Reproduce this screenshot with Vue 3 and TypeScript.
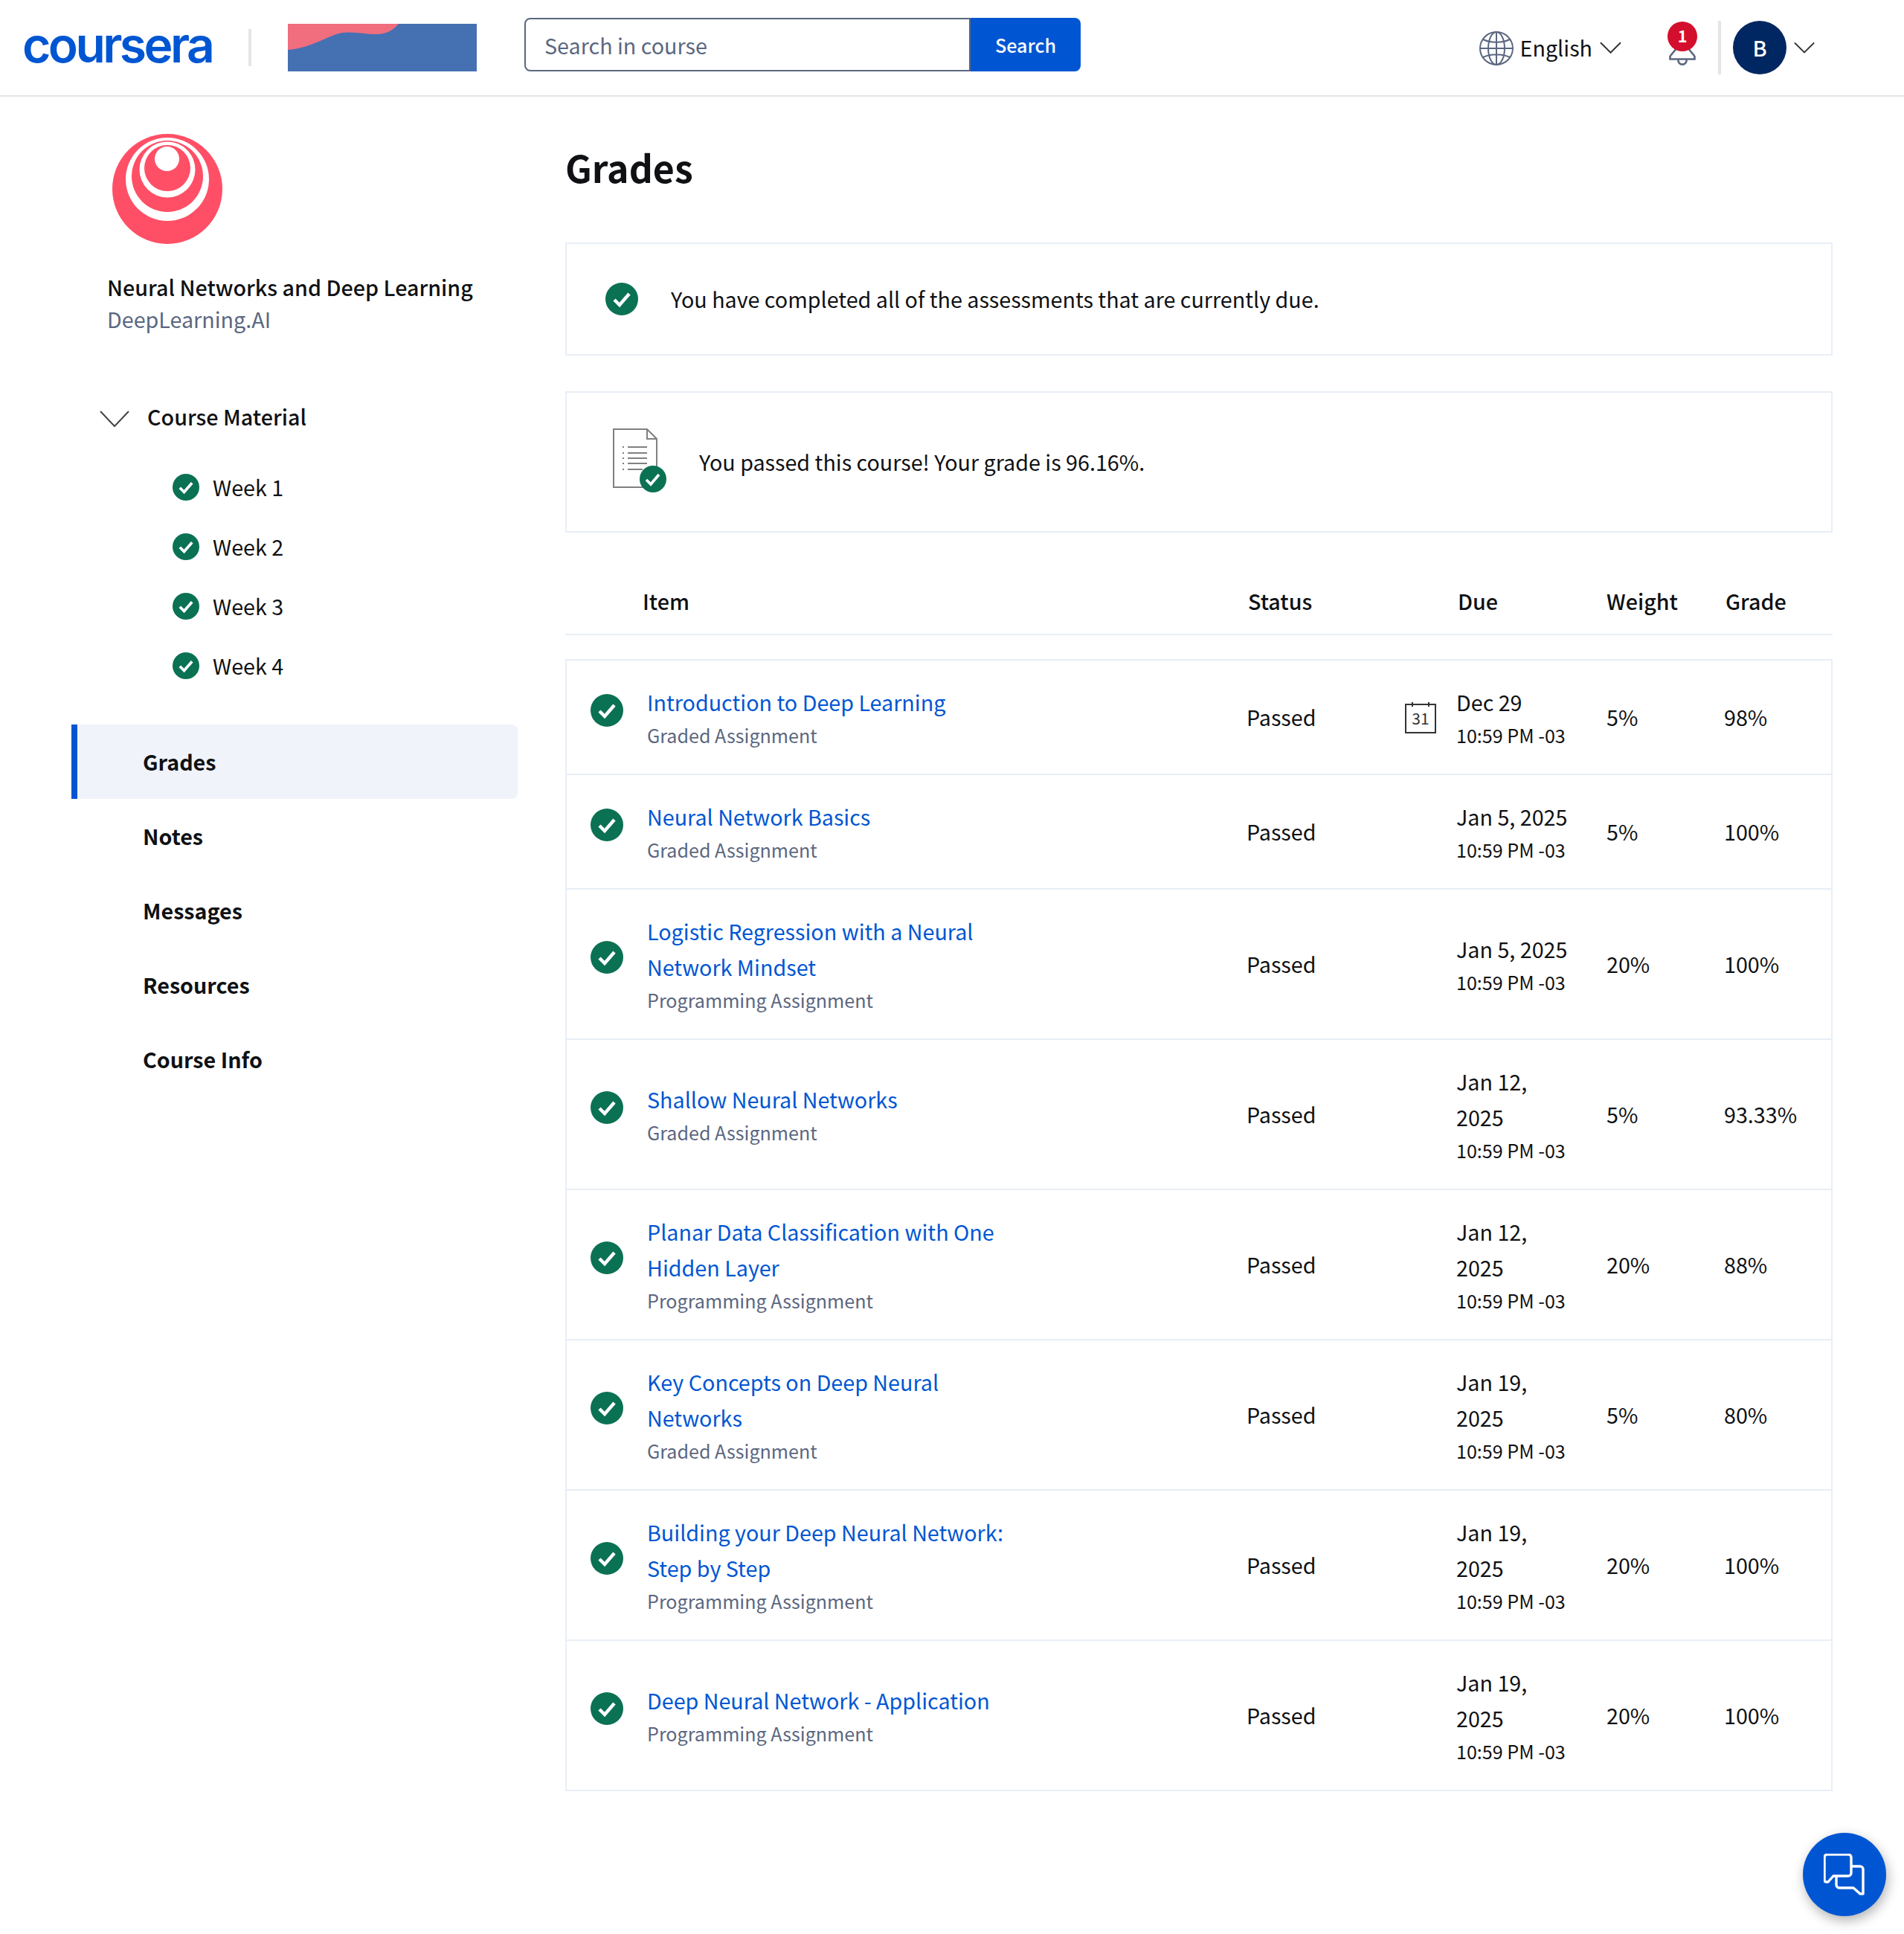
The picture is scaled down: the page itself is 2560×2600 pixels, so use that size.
<script setup lang="ts">
interface GradeRow {
  title: string;
  kind: string;
  due: string;
  weight: string;
  grade: string;
  calendar?: boolean;
}

const weeks = ["Week 1", "Week 2", "Week 3", "Week 4"];
const navItems = ["Grades", "Notes", "Messages", "Resources", "Course Info"];

const graded = "Graded Assignment";
const programming = "Programming Assignment";

const rows: GradeRow[] = [
  { title: "Introduction to Deep Learning", kind: graded, due: "Dec 29", weight: "5%", grade: "98%", calendar: true },
  { title: "Neural Network Basics", kind: graded, due: "Jan 5, 2025", weight: "5%", grade: "100%" },
  { title: "Logistic Regression with a Neural Network Mindset", kind: programming, due: "Jan 5, 2025", weight: "20%", grade: "100%" },
  { title: "Shallow Neural Networks", kind: graded, due: "Jan 12, 2025", weight: "5%", grade: "93.33%" },
  { title: "Planar Data Classification with One Hidden Layer", kind: programming, due: "Jan 12, 2025", weight: "20%", grade: "88%" },
  { title: "Key Concepts on Deep Neural Networks", kind: graded, due: "Jan 19, 2025", weight: "5%", grade: "80%" },
  { title: "Building your Deep Neural Network: Step by Step", kind: programming, due: "Jan 19, 2025", weight: "20%", grade: "100%" },
  { title: "Deep Neural Network - Application", kind: programming, due: "Jan 19, 2025", weight: "20%", grade: "100%" },
];
</script>

<template>
  <div class="page">
    <header class="topbar">
      <span class="logo">coursera</span>
      <span class="logo-sep"></span>
      <svg class="banner" viewBox="0 0 254 64" width="254" height="64">
        <rect width="254" height="64" fill="#4571b3" />
        <path d="M0 0H149C142 8 134 14 118 14C104 14 88 10 73 12C56 15 30 33 0 35Z" fill="#f06e7e" />
      </svg>
      <form class="search" @submit.prevent>
        <input class="search-input" type="text" placeholder="Search in course" />
        <button class="search-btn" type="submit">Search</button>
      </form>
      <div class="top-right">
        <svg class="globe" viewBox="0 0 46 46" width="46" height="46" fill="none" stroke="#5b6780" stroke-width="2">
          <circle cx="23" cy="23" r="22" />
          <ellipse cx="23" cy="23" rx="11" ry="22" />
          <path d="M23 1V45M1 23H45M5 11C15 16 31 16 41 11M5 35C15 30 31 30 41 35" />
        </svg>
        <span class="lang">English</span>
        <svg class="chev" viewBox="0 0 30 16" width="29" height="16" fill="none" stroke="#333" stroke-width="2"><path d="M1 1L15 15L29 1" /></svg>
        <div class="bell">
          <svg viewBox="0 0 36 32" width="36" height="32" fill="none" stroke="#5b6780" stroke-width="2.6">
            <path d="M1.5 23.5V20C3 16 8 14 10 8H26C28 14 33 16 34.5 20V23.5Z" />
            <path d="M12.5 24A5.6 5.6 0 1 0 23.5 24" />
          </svg>
          <span class="badge">1</span>
        </div>
        <span class="top-sep"></span>
        <span class="avatar">B</span>
        <svg class="chev" viewBox="0 0 30 16" width="28" height="16" fill="none" stroke="#333" stroke-width="2"><path d="M1 1L15 15L29 1" /></svg>
      </div>
    </header>

    <div class="body">
      <aside class="sidebar">
        <svg class="course-logo" viewBox="0 0 148 148" width="148" height="148">
          <circle cx="74" cy="74" r="74" fill="#ff4f66" />
          <circle cx="74" cy="61" r="56" fill="#fff" />
          <circle cx="74" cy="57" r="48" fill="#ff4f66" />
          <circle cx="74" cy="48" r="37.5" fill="#fff" />
          <circle cx="74" cy="46" r="31" fill="#ff4f66" />
          <circle cx="73.5" cy="33.5" r="16.5" fill="#fff" />
        </svg>
        <div class="course-name">Neural Networks and Deep Learning</div>
        <div class="course-org">DeepLearning.AI</div>

        <div class="material">
          <svg viewBox="0 0 40 22" width="40" height="22" fill="none" stroke="#444" stroke-width="2"><path d="M1 1L20 21L39 1" /></svg>
          <span>Course Material</span>
        </div>
        <ul class="weeks">
          <li v-for="week in weeks" :key="week">
            <svg class="check week-check" viewBox="0 0 44 44">
              <circle cx="22" cy="22" r="22" fill="#0b7153" />
              <path d="M12 23L19 30L32 15" fill="none" stroke="#fff" stroke-width="4.5" />
            </svg>
            {{ week }}
          </li>
        </ul>
        <nav class="nav">
          <a v-for="(item, i) in navItems" :key="item" class="nav-item" :class="{ active: i === 0 }">{{ item }}</a>
        </nav>
      </aside>

      <main class="main">
        <h1>Grades</h1>
        <section class="card card-due">
          <svg class="check" viewBox="0 0 44 44">
            <circle cx="22" cy="22" r="22" fill="#0b7153" />
            <path d="M12 23L19 30L32 15" fill="none" stroke="#fff" stroke-width="4.5" />
          </svg>
          <span>You have completed all of the assessments that are currently due.</span>
        </section>
        <section class="card card-pass">
          <svg class="doc" viewBox="0 0 72 86" width="72" height="86" fill="none">
            <path d="M1 1H46L59 14V79H1Z" fill="#fff" stroke="#808080" stroke-width="2" />
            <path d="M46 1V14H59" stroke="#808080" stroke-width="2" />
            <path d="M20 25H46M20 33H46M20 40H46M20 47H46M20 55H40" stroke="#808080" stroke-width="2" />
            <path d="M13 25H15M13 33H15M13 40H15M13 47H15M13 55H15" stroke="#808080" stroke-width="2" />
            <circle cx="54" cy="68" r="18" fill="#0b7153" />
            <path d="M45 69L51 75L62 62" stroke="#fff" stroke-width="3.6" />
          </svg>
          <span>You passed this course! Your grade is 96.16%.</span>
        </section>

        <div class="table-head">
          <span>Item</span>
          <span>Status</span>
          <span>Due</span>
          <span>Weight</span>
          <span>Grade</span>
        </div>

        <div class="table">
          <div v-for="row in rows" :key="row.title" class="row">
            <svg class="check row-check" viewBox="0 0 44 44">
              <circle cx="22" cy="22" r="22" fill="#0b7153" />
              <path d="M12 23L19 30L32 15" fill="none" stroke="#fff" stroke-width="4.5" />
            </svg>
            <div class="item">
              <a class="item-title">{{ row.title }}</a>
              <div class="sub">{{ row.kind }}</div>
            </div>
            <div>Passed</div>
            <div class="cal-cell">
              <svg v-if="row.calendar" viewBox="0 0 44 44" width="44" height="44" fill="none" stroke="#333" stroke-width="2">
                <path d="M2 5H42V43H2Z" />
                <path d="M11 2V8M33 2V8" />
                <text x="22" y="32" text-anchor="middle" class="cal-num">31</text>
              </svg>
            </div>
            <div class="due">
              <div class="due-date">{{ row.due }}</div>
              <div class="sub due-time">10:59 PM -03</div>
            </div>
            <div>{{ row.weight }}</div>
            <div>{{ row.grade }}</div>
          </div>
        </div>
      </main>
    </div>

    <button class="chat" type="button" aria-label="Chat">
      <svg viewBox="0 0 56 56" width="56" height="56" fill="none" stroke="#fff" stroke-width="3.4" stroke-linejoin="round">
        <path d="M5 1H33A4 4 0 0 1 37 5V26A4 4 0 0 1 33 30H13L6 38H3A2 2 0 0 1 1 36V5A4 4 0 0 1 5 1Z" />
        <path d="M37 17H49A4 4 0 0 1 53 21V54H49L40 46H21A4 4 0 0 1 17 42V30" />
      </svg>
    </button>
  </div>
</template>

<style>
html,
body {
  margin: 0;
  background: #fff;
}
</style>

<style scoped>
.page {
  position: relative;
  height: 2600px;
  overflow: hidden;
  font-family: "Noto Sans CJK SC", "Noto Sans", sans-serif;
  font-size: 28.7px;
  line-height: 48px;
  color: #0f1114;
  background: #fff;
}

.topbar {
  display: flex;
  align-items: center;
  height: 128px;
  border-bottom: 2px solid #e5e5e5;
  padding-left: 30px;
  padding-right: 120px;
  box-sizing: content-box;
}

.logo {
  width: 254px;
  font-family: Inter, sans-serif;
  font-size: 66px;
  font-weight: 600;
  letter-spacing: -3.6px;
  line-height: 66px;
  margin-top: -8px;
  color: #0056d2;
}

.logo-sep {
  width: 4px;
  height: 50px;
  margin-left: 50px;
  background: #e5e5e5;
}

.banner {
  margin-left: 49px;
}

.search {
  display: flex;
  margin-left: 64px;
  margin-top: -8px;
}

.search-input {
  width: 600px;
  height: 72px;
  box-sizing: border-box;
  border: 2px solid #5b6780;
  border-radius: 8px 0 0 8px;
  padding: 0 25px;
  font: inherit;
  color: #0f1114;
}

.search-input::placeholder {
  color: #5b6780;
  opacity: 1;
}

.search-btn {
  width: 148px;
  height: 72px;
  border: 0;
  border-radius: 0 8px 8px 0;
  background: #0056d2;
  color: #fff;
  font: inherit;
  font-size: 25.1px;
  font-weight: 500;
}

.top-right {
  display: flex;
  align-items: center;
  margin-left: auto;
}

.globe {
  margin-top: 2px;
}

.lang {
  margin-left: 9px;
}

.chev {
  margin-left: 10px;
}

.bell {
  position: relative;
  width: 36px;
  height: 32px;
  margin-left: 64px;
  margin-top: 16px;
}

.bell svg {
  display: block;
}

.badge {
  position: absolute;
  left: -2px;
  top: -27px;
  width: 40px;
  height: 40px;
  border-radius: 50%;
  background: #d30f2d;
  color: #fff;
  font-size: 21.5px;
  font-weight: 700;
  line-height: 38px;
  text-align: center;
}

.top-sep {
  width: 4px;
  height: 72px;
  margin-left: 30px;
  background: #e5e5e5;
}

.avatar {
  width: 72px;
  height: 72px;
  margin-left: 16px;
  border-radius: 50%;
  background: #002761;
  color: #fff;
  font-weight: 500;
  line-height: 72px;
  text-align: center;
}

.body {
  display: flex;
  padding-left: 96px;
}

.sidebar {
  width: 600px;
  margin-right: 64px;
  padding-top: 50px;
}

.course-logo {
  display: block;
  margin-left: 55px;
}

.course-name {
  margin-top: 34px;
  margin-left: 48px;
  font-weight: 500;
  line-height: 48px;
}

.course-org {
  margin-left: 48px;
  margin-top: -5px;
  color: #5b6780;
}

.material {
  display: flex;
  align-items: center;
  gap: 24px;
  margin-top: 83px;
  margin-left: 38px;
  font-weight: 500;
}

.material svg {
  margin-top: 6px;
}

.weeks {
  list-style: none;
  margin: 0;
  padding: 0 0 0 136px;
  margin-top: 31px;
}

.weeks li {
  display: flex;
  align-items: center;
  height: 80px;
  gap: 18px;
}

.check {
  display: block;
  width: 44px;
  height: 44px;
  flex: none;
}

.week-check {
  width: 36px;
  height: 36px;
}

.nav {
  display: flex;
  flex-direction: column;
  margin-top: 39px;
}

.nav-item {
  display: block;
  height: 100px;
  padding-left: 96px;
  font-weight: 700;
  line-height: 100px;
}

.nav-item.active {
  box-sizing: border-box;
  padding-left: 88px;
  border-left: 8px solid #0056d2;
  border-radius: 0 8px 8px 0;
  background: #f0f3f9;
}

.main {
  width: 1704px;
  padding-top: 46px;
}

h1 {
  margin: 0;
  font-size: 50px;
  font-weight: 700;
  line-height: 96px;
}

.card {
  display: flex;
  align-items: center;
  box-sizing: border-box;
  border: 2px solid #e8eef7;
}

.card-due {
  height: 152px;
  margin-top: 54px;
  padding-left: 52px;
  gap: 44px;
}

.card-pass {
  height: 190px;
  margin-top: 48px;
  padding-left: 62px;
  gap: 44px;
}

.doc {
  margin-top: -4px;
}

.table-head {
  display: grid;
  grid-template-columns: 814px 282px 200px 160px 1fr;
  align-items: center;
  height: 138px;
  box-sizing: border-box;
  padding-left: 104px;
  padding-top: 48px;
  border-bottom: 2px solid #e8eef7;
  font-weight: 500;
}

.table {
  margin-top: 32px;
  border: 2px solid #e8eef7;
  border-top: 0;
}

.row {
  display: grid;
  grid-template-columns: 44px 838px 212px 70px 202px 158px 1fr;
  align-items: center;
  padding: 32px 0 32px 32px;
  border-top: 2px solid #e8eef7;
}

.row-check {
  margin-top: -18px;
}

.item {
  margin-left: 32px;
  width: 500px;
}

.item-title {
  color: #0056d2;
}

.sub {
  font-size: 25.1px;
  line-height: 40px;
  color: #5b6780;
}

.due {
  width: 160px;
}

.due-time {
  color: #0f1114;
  white-space: nowrap;
}

.cal-cell svg {
  display: block;
}

.cal-num {
  font-size: 21px;
  fill: #333;
  stroke: none;
}

.chat {
  position: absolute;
  right: 24px;
  bottom: 24px;
  display: flex;
  align-items: center;
  justify-content: center;
  width: 112px;
  height: 112px;
  padding: 0;
  border: 0;
  border-radius: 50%;
  background: #0056d2;
  box-shadow: 2px 6px 16px rgba(0, 0, 0, 0.3);
}
</style>
